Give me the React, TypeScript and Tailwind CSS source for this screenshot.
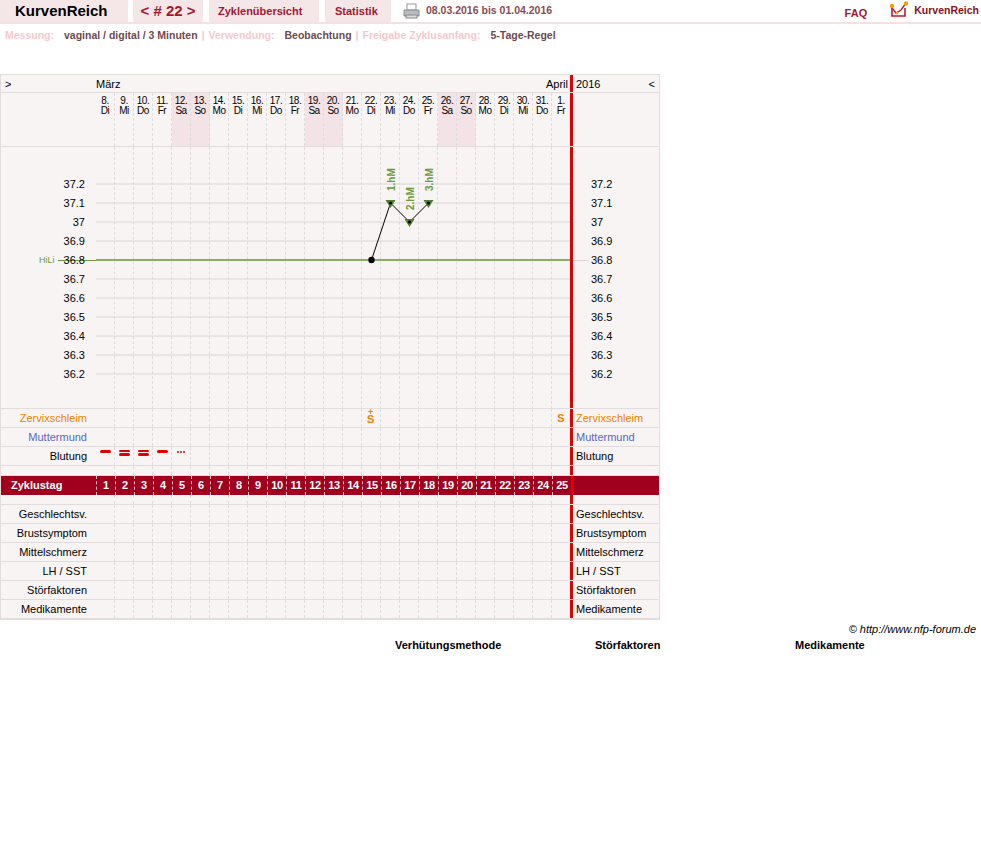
import React from "react";

const days = ["8.|Di","9.|Mi","10.|Do","11.|Fr","12.|Sa","13.|So","14.|Mo","15.|Di","16.|Mi","17.|Do","18.|Fr","19.|Sa","20.|So","21.|Mo","22.|Di","23.|Mi","24.|Do","25.|Fr","26.|Sa","27.|So","28.|Mo","29.|Di","30.|Mi","31.|Do","1.|Fr"];
const weekend = [4,5,11,12,18,19];
const temps = ["37.2","37.1","37","36.9","36.8","36.7","36.6","36.5","36.4","36.3","36.2"];

function Cells({ render, cls = "" }: { render?: (i: number) => React.ReactNode; cls?: string }) {
  return (
    <div className="flex">
      {days.map((_, i) => (
        <div key={i} className={`w-[19px] shrink-0 border-r border-dashed border-[#ddd] flex items-center justify-center ${cls}`}>
          {render ? render(i) : null}
        </div>
      ))}
    </div>
  );
}

const Red = () => <div className="w-[3px] bg-[#e00000] -ml-[1px] shrink-0 relative z-10" />;

function Row({ label, right, color = "text-black", children }: { label: string; right: string; color?: string; children?: (i: number) => React.ReactNode }) {
  return (
    <div className="flex h-[19px] border-b border-[#e2dcdc]">
      <div className={`w-[95px] shrink-0 text-right pr-[9px] leading-[19px] ${color}`}>{label}</div>
      <Cells render={children} />
      <Red />
      <div className={`flex-1 pl-[3px] leading-[19px] ${color}`}>{right}</div>
    </div>
  );
}

function Blank({ h }: { h: string }) {
  return (
    <div className={`flex ${h} border-b border-[#e2dcdc]`}>
      <div className="w-[95px] shrink-0" />
      <Cells />
      <Red />
      <div className="flex-1" />
    </div>
  );
}

export default function App() {
  const cx = (i: number) => i * 19 + 9.5;
  const ty = (t: number) => 37 + (37.2 - t) * 190;
  return (
    <div className="w-[981px] h-[859px] bg-white text-[11px] text-black" style={{ fontFamily: '"Liberation Sans", Arial, sans-serif' }}>
      <div className="flex h-[24px] border-b-2 border-[#f3e1e4] items-stretch">
        <div className="w-[128px] bg-[#f5e6e8] flex items-center pl-[15px] text-[15px] font-bold text-black">KurvenReich</div>
        <div className="w-[70px] ml-[5px] bg-[#f5e6e8] flex items-center justify-center text-[15px] font-bold text-[#a3172f]">&lt; # 22 &gt;</div>
        <div className="w-[110px] ml-[6px] bg-[#f5e6e8] flex items-center pl-[9px] text-[11px] font-bold text-[#a3172f]">Zyklenübersicht</div>
        <div className="w-[66px] ml-[6px] bg-[#f5e6e8] flex items-center pl-[10px] text-[11px] font-bold text-[#a3172f]">Statistik</div>
        <div className="flex items-center ml-[12px] gap-[6px]">
          <svg width="17" height="16" viewBox="0 0 17 16">
            <rect x="4" y="1" width="9" height="6" fill="#fff" stroke="#999" />
            <path d="M1 7h15v6H1z" fill="#b8bcc4" stroke="#888" />
            <rect x="3" y="12" width="11" height="3" fill="#ddd" stroke="#888" />
          </svg>
          <span className="text-[10.5px] font-bold text-[#8a4a55]">08.03.2016 bis 01.04.2016</span>
        </div>
        <div className="flex-1" />
        <div className="flex items-center pt-[5px] mr-[22px] text-[11px] font-bold text-[#a3172f]">FAQ</div>
        <div className="flex items-start pt-[1px] mr-[2px] gap-[5px]">
          <svg width="20" height="17" viewBox="0 0 20 17">
            <path d="M3 7v8h13V7" fill="none" stroke="#c0172f" strokeWidth="1.6" />
            <path d="M3 7l4 5 5-3 5-7" fill="none" stroke="#c0172f" strokeWidth="1.4" />
            <circle cx="3" cy="5" r="2.2" fill="#f4a000" />
            <circle cx="17" cy="2.5" r="2.2" fill="#f4a000" />
            <circle cx="8" cy="12" r="1.2" fill="#f4a000" />
          </svg>
          <span className="text-[10.5px] font-bold text-[#8a1020] mt-[2px]">KurvenReich</span>
        </div>
      </div>
      <div className="flex gap-[4px] px-[5px] pt-[4px] text-[10.5px] font-bold">
        <span className="text-[#f5c8cf]">Messung:</span>
        <span className="text-[#6d4a50] ml-[6px]">vaginal / digital / 3 Minuten</span>
        <span className="text-[#f5c8cf]">|</span>
        <span className="text-[#f5c8cf]">Verwendung:</span>
        <span className="text-[#6d4a50] ml-[6px]">Beobachtung</span>
        <span className="text-[#f5c8cf]">|</span>
        <span className="text-[#f5c8cf]">Freigabe Zyklusanfang:</span>
        <span className="text-[#6d4a50] ml-[6px]">5-Tage-Regel</span>
      </div>

      <div className="mt-[30px] w-[660px] bg-[#f9f4f4] border border-[#e2dcdc] text-[11px]">
        <div className="flex h-[18px] border-b border-[#e2dcdc] leading-[18px]">
          <div className="w-[95px] shrink-0 pl-[4px]">&gt;</div>
          <div className="w-[475px] shrink-0 flex justify-between pr-[3px]"><span>März</span><span>April</span></div>
          <Red />
          <div className="flex-1 flex justify-between pl-[3px] pr-[4px]"><span>2016</span><span>&lt;</span></div>
        </div>
        <div className="flex h-[54px] border-b border-[#e2dcdc]">
          <div className="w-[95px] shrink-0" />
          <div className="flex">
            {days.map((d, i) => {
              const [a, b] = d.split("|");
              return (
                <div key={i} className={`w-[19px] shrink-0 border-r border-dashed border-[#ddd] text-center text-[10px] leading-[10px] pt-[3px] tracking-[-0.5px] ${weekend.includes(i) ? "bg-[#f3e3e6]" : ""}`}>
                  <div>{a}</div><div>{b}</div>
                </div>
              );
            })}
          </div>
          <Red />
          <div className="flex-1" />
        </div>
        <div className="flex h-[262px] border-b border-[#e2dcdc] relative">
          <div className="w-[95px] shrink-0 relative">
            <div className="absolute left-[57px] right-0 h-[1px] bg-[#6a9a3a]" style={{ top: ty(36.8) }} />
            {temps.map((t, k) => (
              <div key={t} className="absolute right-[11px] text-[11px] leading-[12px] relative-z" style={{ top: 37 + k * 19 - 6 }}>{t}</div>
            ))}
            <div className="absolute left-[38px] text-[#6a9a3a] text-[9px] leading-[12px]" style={{ top: 37 + 4 * 19 - 6 }}>HiLi</div>
          </div>
          <div className="relative w-[475px] shrink-0">
            <Cells cls="h-[262px]" />
            <svg className="absolute inset-0" width="475" height="262">
              {temps.map((_, k) => (
                <line key={k} x1="0" x2="475" y1={37 + k * 19} y2={37 + k * 19} stroke="#dcd6d6" />
              ))}
              <line x1="0" x2="475" y1={ty(36.8)} y2={ty(36.8)} stroke="#6a9a3a" strokeWidth="1.3" />
              <polyline points={`${cx(14)},${ty(36.8)} ${cx(15)},${ty(37.1)} ${cx(16)},${ty(37.0)} ${cx(17)},${ty(37.1)}`} fill="none" stroke="#000" />
              {[15, 16, 17].map((i, n) => {
                const t = n === 1 ? 37.0 : 37.1;
                const x = cx(i), y = ty(t);
                return (
                  <g key={i}>
                    <path d={`M${x - 5} ${y - 3}h10l-5 8z`} fill="#4f7f2a" />
                    <circle cx={x} cy={y} r="1.6" fill="#000" />
                    <text transform={`translate(${x + 4} ${y - 12}) rotate(-90)`} fontSize="10" fontWeight="bold" fill="#6a9a3a" fontFamily="Liberation Sans, Arial, sans-serif">{`${n + 1}.hM`}</text>
                  </g>
                );
              })}
              <circle cx={cx(14)} cy={ty(36.8)} r="3.2" fill="#000" />
            </svg>
          </div>
          <Red />
          <div className="flex-1 relative">
            <div className="absolute left-0 right-[70px] h-[1px] bg-[#dcd6d6]" style={{ top: ty(36.8) }} />
            {temps.map((t, k) => (
              <div key={t} className="absolute left-[18px] text-[11px] leading-[12px]" style={{ top: 37 + k * 19 - 6 }}>{t}</div>
            ))}
          </div>
        </div>
        <Row label="Zervixschleim" right="Zervixschleim" color="text-[#f08000]">
          {(i) => i === 14 ? <div className="relative w-[10px] h-[19px] text-[#f08000] font-bold"><span className="absolute left-[2px] top-0 text-[9px] leading-[9px]">+</span><span className="absolute left-[1px] top-[6px] text-[11px] leading-[11px]">S</span></div> : i === 24 ? <span className="text-[#f08000] font-bold text-[11px]">S</span> : null}
        </Row>
        <Row label="Muttermund" right="Muttermund" color="text-[#5566cc]" />
        <Row label="Blutung" right="Blutung">
          {(i) => {
            if (i === 0 || i === 3) return <div className="self-start mt-[3px] w-[11px] h-[3px] rounded-full bg-[#e00000]" />;
            if (i === 1 || i === 2) return <div className="self-start mt-[3px] flex flex-col gap-[1px]"><div className="w-[11px] h-[2.5px] rounded-full bg-[#e00000]" /><div className="w-[11px] h-[2.5px] rounded-full bg-[#e00000]" /></div>;
            if (i === 4) return <div className="self-start mt-[4px] flex gap-[1px]"><div className="w-[2px] h-[2px] bg-[#e00000] rounded-full" /><div className="w-[2px] h-[2px] bg-[#e00000] rounded-full" /><div className="w-[2px] h-[2px] bg-[#e00000] rounded-full" /></div>;
            return null;
          }}
        </Row>
        <Blank h="h-[10px]" />
        <div className="flex h-[19px] bg-[#a0001e] text-white font-bold">
          <div className="w-[95px] shrink-0 pl-[10px] leading-[19px]">Zyklustag</div>
          <div className="flex">
            {days.map((_, i) => (
              <div key={i} className="w-[19px] shrink-0 border-l border-dashed border-[#f0c0c8] text-center leading-[19px] text-[11px] tracking-[-0.3px]">{i + 1}</div>
            ))}
          </div>
          <div className="w-[3px] bg-[#e00000] shrink-0" />
          <div className="flex-1" />
        </div>
        <Blank h="h-[10px]" />
        {["Geschlechtsv.", "Brustsymptom", "Mittelschmerz", "LH / SST", "Störfaktoren", "Medikamente"].map((l) => (
          <Row key={l} label={l} right={l} />
        ))}
      </div>
      <div className="flex justify-end pr-[5px] pt-[1px] italic text-[11px]">© http://www.nfp-forum.de</div>
      <div className="relative h-[14px] font-bold text-[11px]">
        <span className="absolute left-[395px]">Verhütungsmethode</span>
        <span className="absolute left-[595px]">Störfaktoren</span>
        <span className="absolute left-[795px]">Medikamente</span>
      </div>
    </div>
  );
}
